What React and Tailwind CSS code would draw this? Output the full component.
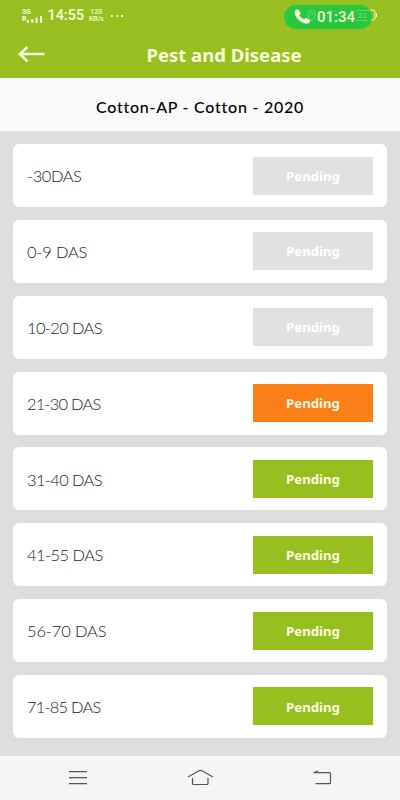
import React from 'react';

const stages = [
    { label: '-30DAS', status: 'disabled', spacing: 'tracking-[-0.45px]' },
    { label: '0-9 DAS', status: 'disabled', spacing: 'tracking-[-0.2px]' },
    { label: '10-20 DAS', status: 'disabled', spacing: 'tracking-[-0.65px]' },
    { label: '21-30 DAS', status: 'current', spacing: 'tracking-[-0.8px]' },
    { label: '31-40 DAS', status: 'open', spacing: 'tracking-[-0.65px]' },
    { label: '41-55 DAS', status: 'open', spacing: 'tracking-[-0.55px]' },
    { label: '56-70 DAS', status: 'open', spacing: 'tracking-[-0.15px]' },
    { label: '71-85 DAS', status: 'open', spacing: 'tracking-[-0.8px]' },
];

const statusColors = {
    disabled: 'bg-[#e1e1e1] text-white',
    current: 'bg-[#fa7f17] text-[#fff6e4]',
    open: 'bg-[#97bf1f] text-[#fbffdf]',
};

const StatusBar = () => (
    <div className="relative flex h-[31px] items-center pl-[22px] font-[Roboto] text-[#f6ffd8]">
        <div className="flex flex-col text-[7px] font-bold leading-[7px]">
            <span>3G</span>
            <div className="flex items-end">
                <span>R</span>
                <svg width="17" height="7" viewBox="0 0 17 7" fill="currentColor">
                    <rect x="1" y="4" width="2" height="3" />
                    <rect x="5.3" y="3" width="2" height="4" />
                    <rect x="9.6" y="1.5" width="2" height="5.5" />
                    <rect x="14" y="0" width="2" height="7" />
                </svg>
            </div>
        </div>
        <span className="ml-[4px] text-[14.3px] font-semibold leading-none">14:55</span>
        <div className="ml-[5px] flex flex-col text-center text-[7px] font-medium leading-[7px]">
            <span>120</span>
            <span className="tracking-[-0.2px]">KB/s</span>
        </div>
        <div className="ml-[8px] flex gap-[3px]">
            <span className="size-[2px] bg-current" />
            <span className="size-[2px] bg-current" />
            <span className="size-[2px] bg-current" />
        </div>
        {/* battery sits partly under the call pill */}
        <svg className="absolute left-[350px] top-[8px]" width="28" height="14" viewBox="0 0 28 14" fill="none" stroke="currentColor">
            <rect x="1" y="2" width="24" height="10" rx="2.5" />
            <path d="M26.500 5v4" />
        </svg>
        <div className="absolute left-[284px] top-[5px] flex h-6 w-[88px] items-center rounded-full bg-[#27c840] pl-[10px]">
            <svg width="18" height="16" viewBox="0 0 19 17" fill="currentColor">
                <path d="M2.2.8C3.4-.1 4.300 0 4.900.9l1.700 2.600c.6.900.4 1.600-.3 2.200l-.9.8c1.100 2 2.900 3.600 5.200 4.500l.8-.9c.6-.7 1.300-.8 2.200-.3l2.800 1.500c1 .6 1.100 1.400.3 2.500-1.200 1.600-3.100 2-5.300 1.300C6.300 13.700 2.400 10.100.9 5.300.3 3.200.7 1.800 2.200.8Z" />
            </svg>
            <svg className="absolute left-[23px] top-[4px] opacity-40" width="9" height="13" viewBox="0 0 9 13" fill="none" stroke="currentColor" strokeWidth=".8">
                <path d="M4.500 12C2 9 .6 6.800.6 4.600a3.900 3.900 0 0 1 7.800 0C8.400 6.800 7 9 4.500 12Z" />
                <circle cx="4.500" cy="4.500" r="1.500" />
            </svg>
            <span className="ml-[5px] text-[15px] font-medium leading-none">01:34</span>
            <svg className="absolute left-[72px] top-[4px] opacity-30" width="14" height="12" viewBox="0 0 14 12" fill="none" stroke="currentColor">
                <path d="M0 1.500h13M0 11.500h12" />
            </svg>
            <span className="absolute left-[74px] top-[6px] text-[8px] leading-[9px] opacity-40">22</span>
        </div>
    </div>
);

const StageCard = ({ label, status, spacing }) => (
    <div className="flex h-[63px] items-center justify-between rounded-[6px] bg-white px-[14px]">
        <span className={`pt-[2px] text-[16.5px] font-light text-[#222] ${spacing}`}>{label}</span>
        <button
            type="button"
            className={`h-[38px] w-[120px] pt-[2px] font-['Noto_Sans'] text-[13.2px] font-bold ${statusColors[status]}`}
        >
            Pending
        </button>
    </div>
);

const NavBar = () => (
    <nav className="flex h-[44px] bg-[#f5f5f5]">
        <svg width="400" height="44" viewBox="0 0 400 44" fill="none" stroke="#555" strokeWidth="1.2">
            <path d="M69 15.700h18M69 21.700h18M69 27.700h18" />
            <path d="M188 21l10.500-6q2-1.200 4 0l10.500 6M192.500 22v5.500q0 1 1 1h13.500q1 0 1-1V22" />
            <path d="M318 14.800l-4.500 1.900h16q1 0 1 1v9q0 1-1 1H315.500" />
        </svg>
    </nav>
);

export default function App() {
    return (
        <div className="flex h-[800px] w-[400px] flex-col overflow-hidden bg-[#dedede] font-[Lato,sans-serif]">
            <header className="h-[78px] bg-[#97bf1f]">
                <StatusBar />
                <div className="relative flex h-[47px] items-center justify-center pl-[48px]">
                    <svg className="absolute left-[18px] top-[15px]" width="27" height="17" viewBox="0 0 27 17" fill="none" stroke="#fbffdf" strokeWidth="2.6">
                        <path d="M26.500 8H1.800M9.500 1L1.800 8l7.700 7.500" />
                    </svg>
                    <h1 className="pt-px font-['Noto_Sans'] text-[18.5px] font-bold text-[#fbffdf]">Pest and Disease</h1>
                </div>
            </header>
            <div className="flex h-[53px] items-center justify-center bg-[#fafafa] pt-[5px] text-[16px] font-medium tracking-[0.75px] text-black">
                Cotton-AP - Cotton - 2020
            </div>
            <main className="flex flex-1 flex-col gap-[12.85px] px-[13px] pt-[13px]">
                {stages.map((stage) => (
                    <StageCard key={stage.label} {...stage} />
                ))}
            </main>
            <NavBar />
        </div>
    );
}
